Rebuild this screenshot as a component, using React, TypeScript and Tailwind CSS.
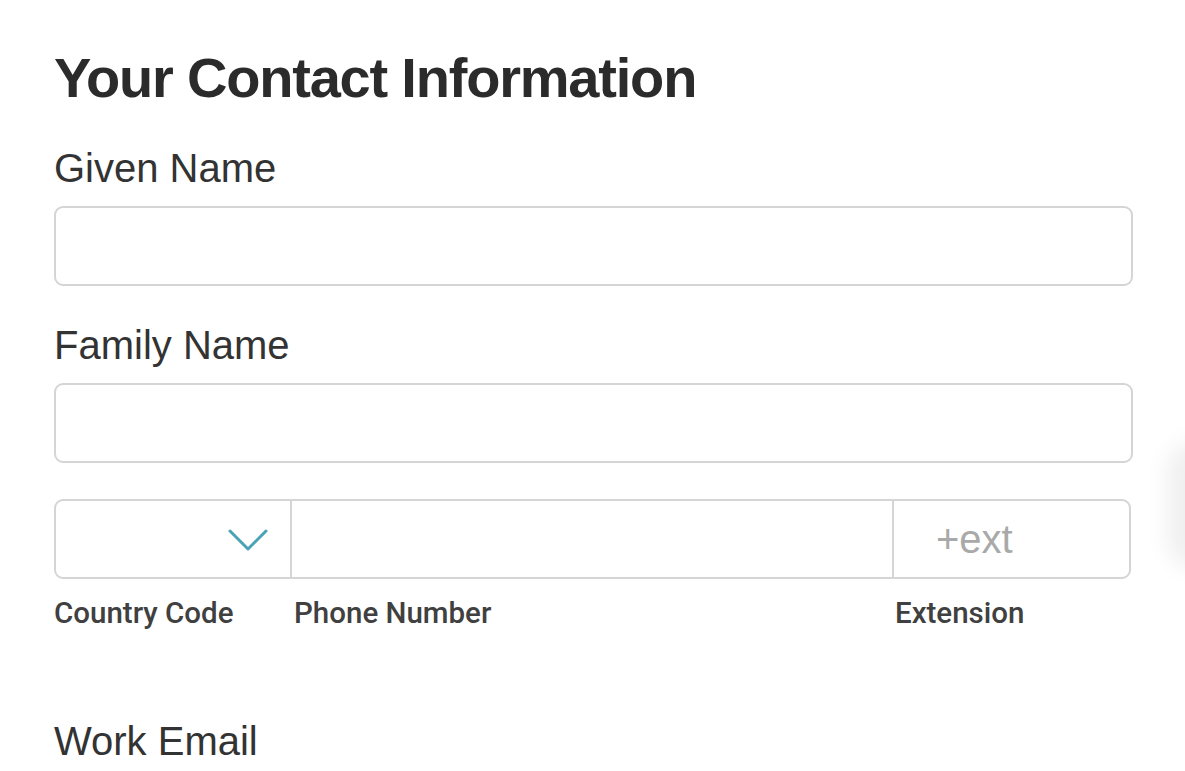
const font = { fontFamily: '"Liberation Sans", Arial, sans-serif' }

function Field({ label, className = '' }: { label: string; className?: string }) {
  return (
    <div className={className}>
      <label className="block text-[40px] leading-[48px] text-[#333]">{label}</label>
      <input
        type="text"
        className="mt-[14px] block w-full h-[80px] rounded-[9px] border-2 border-[#d5d5d5] bg-white px-5 text-[36px] outline-none"
      />
    </div>
  )
}

function Chevron() {
  return (
    <svg width="42" height="24" viewBox="0 0 42 24" fill="none">
      <polyline
        points="3,3 21,21 39,3"
        stroke="#4aa2b7"
        strokeWidth="3"
        strokeLinecap="round"
        strokeLinejoin="round"
      />
    </svg>
  )
}

export default function App() {
  return (
    <div
      className="relative min-h-[771px] w-[1185px] overflow-hidden bg-white pl-[54px] pr-[52px] pt-[46px]"
      style={font}
    >
      {/* faint shadow of something off-screen on the right */}
      <div className="absolute right-[-46px] top-[440px] h-[130px] w-[64px] rounded-full bg-black/[0.06] blur-[10px]" />

      <h1 className="text-[56px] leading-[64px] font-bold tracking-[-1.2px] text-[#2b2b2b]">
        Your Contact Information
      </h1>

      <Field label="Given Name" className="mt-[34px]" />
      <Field label="Family Name" className="mt-[35px]" />

      {/* phone row */}
      <div className="mt-[36px] w-[1077px]">
        <div className="flex h-[80px] rounded-[9px] border-2 border-[#d5d5d5]">
          <div className="flex w-[236px] items-center justify-end border-r-2 border-[#d5d5d5] pr-[21px] pt-[1px]">
            <Chevron />
          </div>
          <div className="flex-1" />
          <div className="flex w-[237px] items-center border-l-2 border-[#d5d5d5] pl-[42px]">
            <span className="text-[40px] text-[#a9a9a9]">+ext</span>
          </div>
        </div>
        <div
          className="mt-[17px] flex text-[29.5px] leading-[34px] font-medium text-[#404040]"
          style={{ fontFamily: 'Roboto, "Liberation Sans", sans-serif' }}
        >
          <span className="w-[240px]">Country Code</span>
          <span className="flex-1">Phone Number</span>
          <span className="w-[236px]">Extension</span>
        </div>
      </div>

      <label className="mt-[87px] block text-[40px] leading-[48px] text-[#333]">Work Email</label>
    </div>
  )
}
